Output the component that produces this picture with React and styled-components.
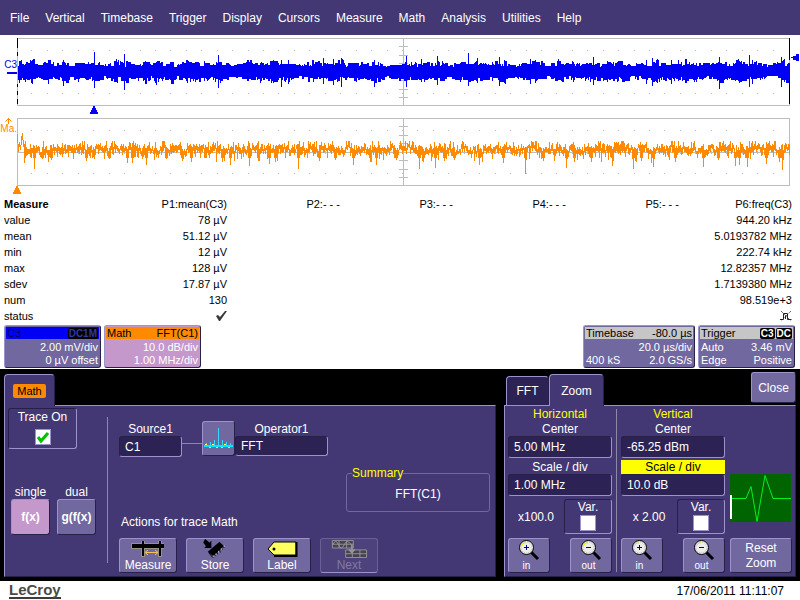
import React from 'react';
import styled, { createGlobalStyle, css } from 'styled-components';

const palette = {
  base: '#433873',
  field: '#2c2354',
  raised: '#7168a0',
  light: '#9c93cc',
  dark: '#282048',
  blue: '#0000f5',
  orange: '#ff8a00',
  pink: '#c598cc',
  silver: '#c6c6c6',
  grid: '#bdbdbd',
  yellow: '#ffff00',
};

const GlobalStyle = createGlobalStyle`
  * {
    box-sizing: border-box;
  }

  body {
    margin: 0;
    background: #fff;
    color: #000;
    font: 12px/14px "Liberation Sans", Arial, sans-serif;
  }

  button, input {
    margin: 0;
    font: inherit;
    color: inherit;
  }
`;

const raised = css`
  border: 1px solid;
  border-color: ${palette.light} ${palette.dark} ${palette.dark} ${palette.light};
  border-radius: 3px;
`;

const sunken = css`
  border: 1px solid;
  border-color: ${palette.dark} ${palette.light} ${palette.light} ${palette.dark};
  border-radius: 3px;
`;

const MenuBar = styled.nav`
  display: flex;
  gap: 16px;
  height: 35px;
  padding: 11px 10px 0;
  background: ${palette.base};
`;

const MenuItem = styled.button`
  padding: 0;
  height: 14px;
  border: none;
  background: none;
  color: #fff;
`;

const Traces = styled.main`
  padding-top: 3px;
`;

const TraceRow = styled.div`
  display: grid;
  grid-template-columns: 17px 1fr 10px;
  height: 68px;
`;

const Gutter = styled.div`
  display: flex;
  flex-direction: column;
  align-items: flex-end;
  padding-top: ${({ $top }) => $top}px;
  color: ${({ $color }) => $color};
  font-size: 10px;
  line-height: 10px;
`;

const ZeroMark = styled.span`
  width: 10px;
  height: 2px;
  margin-top: 2px;
  background: ${palette.blue};
`;

const Graph = styled.svg`
  display: block;
  width: 100%;
  height: 68px;
`;

const TriggerLevel = styled.svg`
  display: block;
  margin-top: 16px;
`;

const MarkerRow = styled.div`
  height: ${({ $height }) => $height}px;
  padding-left: ${({ $left }) => $left}px;

  svg {
    display: block;
  }
`;

const MeasureTable = styled.table`
  width: calc(100% - 12px);
  margin-left: 4px;
  table-layout: fixed;
  border-collapse: collapse;
  font-size: 11px;
  line-height: 16px;

  th, td {
    height: 16px;
    padding: 0;
    text-align: right;
    font-weight: normal;
    white-space: pre;
  }

  th:first-child {
    width: 110px;
    text-align: left;
  }

  thead th:first-child {
    font-weight: bold;
  }

  svg {
    display: block;
    margin-left: auto;
  }
`;

const Descriptors = styled.section`
  display: flex;
  gap: 3px;
  padding: 1px 5px 1px 4px;
  font-size: 11px;
  line-height: 13px;
`;

const Descriptor = styled.div`
  width: ${({ $wide }) => ($wide ? 112 : 97)}px;
  height: 43px;
  padding: 1px;
  border: 1px solid;
  border-color: ${palette.light} ${palette.dark} ${palette.dark} ${palette.light};
  border-radius: 3px;
  background: ${({ $color }) => $color || palette.raised};
  color: #fff;

  &:nth-child(3) {
    margin-left: auto;
  }
`;

const DescriptorHead = styled.div`
  display: flex;
  align-items: center;
  height: 12px;
  margin-bottom: 2px;
  padding: 0 1px;
  background: ${({ $color }) => $color};
  color: ${({ $text }) => $text || '#000'};

  span:first-child {
    margin-right: auto;
  }
`;

const DescriptorLine = styled.div`
  display: flex;
  justify-content: space-between;
  padding: 0 1px;

  span:only-child {
    margin-left: auto;
  }
`;

const Badge = styled.span`
  height: 11px;
  margin-left: 1px;
  padding: 0 1px;
  border-radius: 2px;
  background: #000;
  color: ${({ $color }) => $color || '#fff'};
  font-size: 10px;
  font-weight: bold;
  line-height: 11px;
`;

const Deck = styled.section`
  display: flex;
  gap: 8px;
  padding: 3px 4px 4px;
  background: #000;
  color: #fff;
`;

const Dialog = styled.div`
  display: flex;
  flex-direction: column;
  flex: ${({ $grow }) => ($grow ? '1 1 auto' : '0 0 auto')};
`;

const Tabs = styled.div`
  display: flex;
  align-items: flex-end;
  height: 34px;
  margin-bottom: -1px;
  padding-left: ${({ $indent }) => $indent || 0}px;
  z-index: 1;
`;

const Tab = styled.button`
  display: flex;
  align-items: center;
  justify-content: center;
  width: ${({ $width }) => $width}px;
  height: ${({ $active }) => ($active ? 32 : 29)}px;
  margin-bottom: ${({ $active }) => ($active ? 0 : 1)}px;
  padding: 0;
  border: 1px solid ${palette.light};
  border-right-color: ${palette.dark};
  border-bottom: none;
  border-radius: 4px 4px 0 0;
  background: ${({ $active }) => ($active ? palette.base : palette.field)};
  color: #fff;
`;

const TabName = styled.span`
  padding: 0 4px;
  border-radius: 2px;
  background: ${palette.orange};
  color: #000;
  font-size: 11px;
`;

const Body = styled.div`
  display: flex;
  height: 172px;
  border: 1px solid;
  border-color: ${palette.light} ${palette.dark} ${palette.dark} ${palette.light};
  background: ${palette.base};
`;

const Side = styled.div`
  width: 102px;
  padding: 2px 3px 0;
`;

const CheckBox = styled.label`
  display: flex;
  flex-direction: column;
  align-items: center;
  width: ${({ $wide }) => ($wide ? 69 : 48)}px;
  height: ${({ $wide }) => ($wide ? 41 : 35)}px;
  padding-top: ${({ $wide }) => ($wide ? 1 : 0)}px;
  ${sunken}

  input {
    appearance: none;
    width: 16px;
    height: 16px;
    margin-top: ${({ $wide }) => ($wide ? 5 : 1)}px;
    border: 1px solid ${palette.light};
    background: #fff;
  }

  input:checked {
    background: #fff url("data:image/svg+xml,%3Csvg xmlns='http://www.w3.org/2000/svg' viewBox='0 0 14 14'%3E%3Cpath d='M2 7l3 4 7-8' fill='none' stroke='%2300c000' stroke-width='3'/%3E%3C/svg%3E");
  }
`;

const Modes = styled.div`
  display: flex;
  gap: 7px;
  margin-top: 36px;
  padding-left: 3px;
`;

const Mode = styled.div`
  display: flex;
  flex-direction: column;
  align-items: center;
`;

const Button = styled.button`
  display: flex;
  flex-direction: column;
  align-items: center;
  justify-content: ${({ $icon }) => ($icon ? 'space-between' : 'center')};
  width: ${({ $width }) => $width}px;
  height: ${({ $height }) => $height || 35}px;
  padding: 0;
  background: ${({ $color }) => $color || palette.raised};
  font-weight: ${({ $bold }) => ($bold ? 'bold' : 'normal')};
  line-height: ${({ $loose }) => ($loose ? 15 : 14)}px;
  color: #fff;
  ${raised}

  &:disabled {
    background: #4d427c;
    border-color: #6a6095;
    border-bottom-color: ${palette.light};
    color: #8079a3;
  }
`;

const Small = styled.span`
  margin-right: 5px;
  font-size: 10px;
  line-height: 12px;
`;

const CloseButton = styled(Button)`
  align-self: flex-start;
  margin-left: auto;
`;

const Divider = styled.div`
  width: 1px;
  margin: ${({ $top, $gap }) => `${$top}px ${$gap}px 0`};
  height: ${({ $height }) => $height}px;
  background: #8d88a6;
`;

const Main = styled.div`
  flex: 1;
  display: flex;
  flex-direction: column;
  padding: 15px 5px 3px 11px;
`;

const Chain = styled.div`
  display: flex;
  align-items: flex-start;
  height: 38px;
`;

const Field = styled.div`
  display: flex;
  flex-direction: column;
  width: ${({ $width }) => ($width ? `${$width}px` : '100%')};
  padding-top: ${({ $top }) => $top || 0}px;
  text-align: center;

  label {
    background: ${({ $selected }) => ($selected ? palette.yellow : 'none')};
    color: ${({ $selected }) => ($selected ? '#000' : '#fff')};
  }
`;

const TextInput = styled.input`
  width: 100%;
  height: ${({ $height }) => $height || 22}px;
  padding: 0 5px;
  outline: none;
  background: ${palette.field};
  ${sunken}
`;

const Wire = styled.div`
  width: 20px;
  height: 1px;
  margin-top: 22px;
  background: #8c8c8c;
`;

const Summary = styled.fieldset`
  align-self: flex-end;
  width: 144px;
  height: 46px;
  min-width: 0;
  margin: 7px 0 3px;
  padding: 7px 0 0;
  border: 1px solid #7168a0;
  border-radius: 3px;

  legend {
    margin-left: 5px;
    padding: 0;
    color: ${palette.yellow};
  }

  output {
    display: block;
    text-align: center;
  }
`;

const Actions = styled.div`
  display: flex;
  gap: 9px;
  margin-top: 9px;
`;

const Caption = styled.p`
  margin: 0;
  padding-left: 2px;
`;

const Axis = styled.div`
  display: flex;
  flex-direction: column;
  gap: 2px;
  width: 104px;
  padding-top: 1px;
`;

const AxisTitle = styled.div`
  height: 14px;
  margin-bottom: -1px;
  text-align: center;
  color: ${palette.yellow};
`;

const AxisRow = styled.div`
  display: flex;
  align-items: center;
  justify-content: space-between;
  height: 35px;
  margin-top: ${({ $top }) => $top}px;
`;

const Factor = styled.span`
  flex: 1;
  text-align: center;
`;

const Preview = styled.div`
  display: flex;
  flex-direction: column;
  justify-content: flex-end;
  gap: 16px;
  padding: 0 0 3px 5px;
`;

const ZoomBody = styled(Body)`
  padding: 0 3px;
`;

const Footer = styled.footer`
  display: flex;
  align-items: center;
  justify-content: space-between;
  height: 19px;
  padding: 0 16px 0 9px;
`;

const Brand = styled.a`
  border-bottom: 2px solid #3c3c3c;
  color: #4a4a4a;
  font-size: 15px;
  font-weight: bold;
  line-height: 14px;
  text-decoration: none;
`;

// small repeatable generator, so the noise is the same on every render
const createNoise = (seed) => {
  let s = seed;
  return () => {
    s = (s * 16807) % 2147483647;
    return s / 2147483647;
  };
};

// [x, top, bottom]
const channelPeaks = [
  [3, 23, 42], [14, 23, 45], [30, 25, 42], [46, 22, 48], [51, 25, 45], [62, 25, 41],
  [77, 14, 50], [99, 21, 44], [107, 16, 52], [127, 24, 42], [139, 24, 47], [153, 24, 42],
  [170, 22, 45], [178, 24, 44], [187, 23, 43], [201, 17, 50], [203, 24, 45], [232, 24, 41],
  [243, 25, 45], [256, 22, 45], [264, 22, 49], [271, 22, 46], [296, 22, 44], [306, 20, 46],
  [316, 21, 47], [324, 20, 49], [339, 25, 44], [357, 22, 49], [389, 18, 49], [404, 21, 44],
  [420, 18, 47], [444, 24, 42], [451, 15, 48], [460, 20, 45], [482, 19, 48], [487, 22, 45],
  [513, 21, 46], [518, 22, 45], [542, 23, 42], [556, 24, 44], [576, 19, 47], [590, 23, 44],
  [601, 23, 43], [629, 22, 46], [635, 20, 48], [640, 21, 45], [654, 22, 46], [661, 22, 43],
  [669, 21, 45], [679, 25, 44], [702, 19, 51], [721, 21, 43], [732, 17, 49], [735, 22, 46],
  [764, 19, 49], [767, 21, 44],
];

const channelPath = (() => {
  const noise = createNoise(4242);
  const peaks = new Map(channelPeaks.map((p) => [p[0], p]));
  let d = '';
  let top = 28;
  let bottom = 39;
  for (let x = 1; x < 773; x += 1) {
    const distance = Math.min(...channelPeaks.map((p) => Math.abs(p[0] - x)));
    const swell = Math.max(0, 6 - distance / 2);
    if (noise() > 0.4) top = Math.round(29 - noise() * 3 - noise() * swell);
    if (noise() > 0.4) bottom = Math.round(38 + noise() * 3 + noise() * swell);
    const peak = peaks.get(x);
    d += peak ? `M${x}.5 ${peak[1]}V${peak[2]}` : `M${x}.5 ${top}V${bottom}`;
  }
  return d;
})();

const spectrumDips = [
  [7, 45], [17, 51], [25, 41], [34, 42], [69, 43], [92, 41], [110, 45], [115, 45], [129, 47],
  [149, 41], [165, 43], [174, 44], [188, 40], [205, 44], [213, 47], [232, 48], [241, 43],
  [252, 46], [258, 44], [281, 51], [302, 43], [318, 42], [336, 47], [353, 44], [359, 47],
  [379, 42], [402, 51], [406, 44], [418, 50], [427, 43], [437, 42], [462, 47], [486, 45],
  [508, 56], [526, 43], [549, 50], [557, 44], [574, 44], [595, 48], [616, 51], [624, 43],
  [636, 49], [658, 44], [686, 49], [701, 42], [718, 48], [722, 47], [730, 49], [749, 46],
  [762, 44], [765, 52],
];

const spectrumPath = (() => {
  const noise = createNoise(977);
  const dips = new Map(spectrumDips);
  let d = 'M0.5 16L1.5 34L2.5 24L3.5 32L4.5 22L5.5 15L6.5 28';
  let level = 31;
  for (let x = 7; x < 773; x += 1) {
    level = level * 0.4 + (26 + noise() * 11) * 0.6;
    const r = noise();
    const high = Math.round(Math.max(23, level - 1 - noise() * (r > 0.6 ? 8 : 3)));
    let low = Math.round(level + 1 + noise() * (r < 0.25 ? 11 : 4));
    if (dips.has(x)) low = dips.get(x);
    if (dips.has(x + 1) || dips.has(x - 1)) low = Math.max(low, 40);
    d += `L${x}.5 ${high}V${low}`;
  }
  return d;
})();

const dotColumns = Array.from({ length: 49 }, (_, i) => Math.round((i + 1) * 15.44));
const tickRows = [8, 17, 25, 42, 51, 59];

const Graticule = ({ children, label }) => (
  <Graph viewBox="0 0 773 68" preserveAspectRatio="none" role="img" aria-label={label}>
    <g fill="none" stroke={palette.grid} shapeRendering="crispEdges">
      <rect x="0.5" y="0.5" width="772" height="67" />
      <path d="M386.5 0V68M0 34.5H773" />
      <path d={tickRows.map((y) => `M382 ${y}.5H391`).join('')} />
      <path d={dotColumns.map((x) => `M${x - 1} 12.5h1M${x - 1} 55.5h1M${x - 1}.5 33v3`).join('')} />
    </g>
    {children}
  </Graph>
);

const PositionMark = ({ color }) => (
  <svg width="8" height="8" viewBox="0 0 8 8" fill={color}>
    <path d="M3 0h2v2h1v2h1v2h1v2H0V6h1V4h1V2h1z" />
  </svg>
);

const StatusOk = () => (
  <svg width="12" height="10" viewBox="0 0 12 10">
    <path d="M1 5l2-1 2 2 5-6 2 0-7 10H4z" fill="#3a3a3a" />
  </svg>
);

const StatusPulse = () => (
  <svg width="12" height="10" viewBox="0 0 12 10" fill="none" stroke="#222">
    <path d="M0 8.500h3.500v-6h4v6h4M5.500 5v3" />
    <path d="M1 0l10 10M11 0L1 10" strokeDasharray="1 1" />
  </svg>
);

const CursorsIcon = () => (
  <svg width="34" height="19" viewBox="0 0 34 19">
    <path d="M0 4h33v6H0zM10 2h4v16h-4zM27 2h4v16h-4z" fill="#989480" />
    <path d="M1 5h32v4H1zM11 2h2v15h-2zM28 2h2v15h-2z" />
    <path d="M15 13.500h11M17 11l-3 2.500 3 2.500M24 11l3 2.500-3 2.500" fill="none" stroke="#f0c850" />
  </svg>
);

const StoreIcon = () => (
  <svg width="26" height="21" viewBox="0 0 26 21">
    <path d="M2 0l5 4 2-2v8H1l2-2-3-4z" />
    <path d="M18 3l5 5L11 19l-6-5z" />
    <path d="M6 15l4 5M10 18l1 3M13 16l1 3M15 14l1 3M18 12l1 3M20 9l1 3M22 7l1 3" stroke="#000" />
    <path d="M11 20v-2M14 18v-2M17 15v-2M20 12v-2M23 9V7" stroke="#c8c4dc" />
  </svg>
);

const TagIcon = () => (
  <svg width="32" height="18" viewBox="0 0 32 18">
    <path d="M8 3h22v13H8L2 10z" fill="#ffff60" stroke="#000" />
    <path d="M30.500 3v14H8" fill="none" stroke="#000" strokeWidth="2" />
    <circle cx="8" cy="10" r="1.500" />
  </svg>
);

const NextIcon = () => (
  <svg width="38" height="20" viewBox="0 0 38 20" fill="#46424f" stroke="#969299">
    <path d="M1.500 1.500h22v8h-22zM1.500 5.500h22M8.500 1.500v8M16.500 1.500v8M15.500 11.500h22v8h-22zM15.500 15.500h22M22.500 11.500v8M30.500 11.500v8" />
    <path d="M2 6q3-7 6 0t6 0 8 1" fill="none" />
    <path d="M22 6v7M19 11l3 3 3-3" fill="none" strokeWidth="2" />
  </svg>
);

const SpectrumIcon = () => (
  <svg width="29" height="22" viewBox="0 0 29 22" fill="none" shapeRendering="crispEdges">
    <path d="M0 18h29" stroke="#00e8ff" strokeWidth="2" />
    <path d="M14.500 0v17M10.500 12v5M18.500 12v5M6.500 14v3M22.500 14v3M2.500 15v2M26.500 15v2" stroke="#35d9ff" />
    <path d="M1 16.500h2M5 19.500h2M8 16.500h2M12 19.500h2M17 19.500h2M20 16.500h2M24 19.500h2" stroke="#ffff60" />
  </svg>
);

const LensIcon = ({ plus }) => (
  <svg width="22" height="21" viewBox="0 0 22 21">
    <path d="M13 13l7 7" stroke="#000" strokeWidth="3" />
    <circle cx="8.500" cy="8.500" r="7" fill="#ededed" stroke="#000" />
    <circle cx="8.500" cy="8.500" r="5.500" fill="none" stroke="#b5b5b5" strokeDasharray="1 1" />
    <path d="M4 6l2-2h2" fill="none" stroke="#f5e600" />
    <path d={plus ? 'M6 8.500h5M8.500 6v5' : 'M6 8.500h5'} stroke="#000080" />
  </svg>
);

const PulseScreen = () => (
  <svg width="62" height="48" viewBox="0 0 62 48">
    <path d="M0 0h61v48H0z" fill="#006400" />
    <path d="M1 24.500h15l5-12 6 35 8-46 8 23h18" fill="none" stroke="#00f020" />
    <path d="M0 21h2v24H0z" fill="#fff" />
  </svg>
);

const menuItems = [
  'File', 'Vertical', 'Timebase', 'Trigger', 'Display', 'Cursors',
  'Measure', 'Math', 'Analysis', 'Utilities', 'Help',
];

const measureRows = [
  ['value', '78 µV', '944.20 kHz'],
  ['mean', '51.12 µV', '5.0193782 MHz'],
  ['min', '12 µV', '222.74 kHz'],
  ['max', '128 µV', '12.82357 MHz'],
  ['sdev', '17.87 µV', '1.7139380 MHz'],
  ['num', '130', '98.519e+3'],
  ['status', <StatusOk />, <StatusPulse />],
];

const ZoomAxis = ({ title, center, scale, factor, selected }) => {
  const id = title.toLowerCase();
  return (
    <Axis>
      <AxisTitle>{title}</AxisTitle>
      <Field>
        <label htmlFor={`${id}-center`}>Center</label>
        <TextInput id={`${id}-center`} defaultValue={center} />
      </Field>
      <Field $selected={selected}>
        <label htmlFor={`${id}-scale`}>Scale / div</label>
        <TextInput id={`${id}-scale`} defaultValue={scale} />
      </Field>
      <AxisRow $top={1}>
        <Factor>{factor}</Factor>
        <CheckBox>
          Var.
          <input type="checkbox" />
        </CheckBox>
      </AxisRow>
      <AxisRow $top={2}>
        <Button $width={42} $icon>
          <LensIcon plus />
          <Small>in</Small>
        </Button>
        <Button $width={42} $icon>
          <LensIcon />
          <Small>out</Small>
        </Button>
      </AxisRow>
    </Axis>
  );
};

const App = () => {
  return (
    <>
      <GlobalStyle />
      <MenuBar>
        {menuItems.map((item) => (
          <MenuItem key={item}>{item}</MenuItem>
        ))}
      </MenuBar>

      <Traces>
        <TraceRow>
          <Gutter $top={22} $color={palette.blue}>
            C3
            <ZeroMark />
          </Gutter>
          <Graticule label="C3">
            <path d={channelPath} stroke={palette.blue} shapeRendering="crispEdges" />
            <path d="M0.500 0v10M0.500 14v4M0.500 46v3M0.500 53v4M0.500 61v5M772.500 0v22M772.500 42v24" stroke="#000" />
          </Graticule>
          <TriggerLevel width="9" height="8" viewBox="0 0 9 8" fill={palette.blue}>
            <path d="M1 3h2V2h3V0h3v7H6V6H3V4H1z" />
          </TriggerLevel>
        </TraceRow>
        <MarkerRow $height={12} $left={90}>
          <PositionMark color={palette.blue} />
        </MarkerRow>
        <TraceRow>
          <Gutter $top={0} $color={palette.orange}>
            <svg width="13" height="6" viewBox="0 0 13 6" fill="none" stroke={palette.orange}>
              <path d="M4.500 0v6M1.500 3.500l3-3 3 3" />
            </svg>
            Ma.
          </Gutter>
          <Graticule label="Math">
            <path d={spectrumPath} fill="none" stroke={palette.orange} shapeRendering="crispEdges" />
          </Graticule>
        </TraceRow>
        <MarkerRow $height={10} $left={13}>
          <PositionMark color={palette.orange} />
        </MarkerRow>

        <MeasureTable>
          <thead>
            <tr>
              <th scope="col">Measure</th>
              <th scope="col">P1:mean(C3)</th>
              <th scope="col">P2:- - -</th>
              <th scope="col">P3:- - -</th>
              <th scope="col">P4:- - -</th>
              <th scope="col">P5:- - -</th>
              <th scope="col">P6:freq(C3)</th>
            </tr>
          </thead>
          <tbody>
            {measureRows.map(([name, mean, freq]) => (
              <tr key={name}>
                <th scope="row">{name}</th>
                <td>{mean}</td>
                <td colSpan={4} />
                <td>{freq}</td>
              </tr>
            ))}
          </tbody>
        </MeasureTable>

        <Descriptors>
          <Descriptor>
            <DescriptorHead $color={palette.blue} $text="#000058">
              <span>C3</span>
              <Badge $color="#3038a0">DC1M</Badge>
            </DescriptorHead>
            <DescriptorLine><span>2.00 mV/div</span></DescriptorLine>
            <DescriptorLine><span>0 µV offset</span></DescriptorLine>
          </Descriptor>
          <Descriptor $color={palette.pink}>
            <DescriptorHead $color={palette.orange}>
              <span>Math</span>
              <span>FFT(C1)</span>
            </DescriptorHead>
            <DescriptorLine><span>10.0 dB/div</span></DescriptorLine>
            <DescriptorLine><span>1.00 MHz/div</span></DescriptorLine>
          </Descriptor>
          <Descriptor $wide>
            <DescriptorHead $color={palette.silver}>
              <span>Timebase</span>
              <span>-80.0 µs</span>
            </DescriptorHead>
            <DescriptorLine><span>20.0 µs/div</span></DescriptorLine>
            <DescriptorLine><span>400 kS</span><span>2.0 GS/s</span></DescriptorLine>
          </Descriptor>
          <Descriptor>
            <DescriptorHead $color={palette.silver}>
              <span>Trigger</span>
              <Badge>C3</Badge>
              <Badge>DC</Badge>
            </DescriptorHead>
            <DescriptorLine><span>Auto</span><span>3.46 mV</span></DescriptorLine>
            <DescriptorLine><span>Edge</span><span>Positive</span></DescriptorLine>
          </Descriptor>
        </Descriptors>
      </Traces>

      <Deck>
        <Dialog $grow>
          <Tabs>
            <Tab $width={51} $active><TabName>Math</TabName></Tab>
          </Tabs>
          <Body>
            <Side>
              <CheckBox $wide>
                Trace On
                <input type="checkbox" defaultChecked />
              </CheckBox>
              <Modes>
                <Mode>
                  <label htmlFor="single">single</label>
                  <Button id="single" $width={39} $height={36} $color={palette.pink} $bold>f(x)</Button>
                </Mode>
                <Mode>
                  <label htmlFor="dual">dual</label>
                  <Button id="dual" $width={39} $height={36} $bold>g(f(x)</Button>
                </Mode>
              </Modes>
            </Side>
            <Divider $top={11} $gap={0} $height={146} />
            <Main>
              <Chain>
                <Field $width={63} $top={1}>
                  <label htmlFor="source">Source1</label>
                  <TextInput id="source" $height={21} defaultValue="C1" />
                </Field>
                <Wire />
                <Button $width={33} aria-label="FFT setup"><SpectrumIcon /></Button>
                <Field $width={93} $top={1}>
                  <label htmlFor="operator">Operator1</label>
                  <TextInput id="operator" $height={20} defaultValue="FFT" />
                </Field>
              </Chain>
              <Summary>
                <legend>Summary</legend>
                <output>FFT(C1)</output>
              </Summary>
              <Caption>Actions for trace Math</Caption>
              <Actions>
                <Button $width={58} $icon><CursorsIcon />Measure</Button>
                <Button $width={58} $icon><StoreIcon />Store</Button>
                <Button $width={58} $icon><TagIcon />Label</Button>
                <Button $width={58} $icon disabled><NextIcon />Next</Button>
              </Actions>
            </Main>
          </Body>
        </Dialog>

        <Dialog>
          <Tabs $indent={2}>
            <Tab $width={43}>FFT</Tab>
            <Tab $width={55} $active>Zoom</Tab>
            <CloseButton $width={45} $height={31}>Close</CloseButton>
          </Tabs>
          <ZoomBody>
            <ZoomAxis title="Horizontal" center="5.00 MHz" scale="1.00 MHz" factor="x100.0" />
            <Divider $top={3} $gap={4} $height={163} />
            <ZoomAxis title="Vertical" center="-65.25 dBm" scale="10.0 dB" factor="x 2.00" selected />
            <Preview>
              <PulseScreen />
              <Button $width={62} $loose>
                <span>Reset</span>
                <span>Zoom</span>
              </Button>
            </Preview>
          </ZoomBody>
        </Dialog>
      </Deck>

      <Footer>
        <Brand href="#lecroy">LeCroy</Brand>
        <time dateTime="2011-06-17T11:11:07">17/06/2011 11:11:07</time>
      </Footer>
    </>
  );
};

export default App;
